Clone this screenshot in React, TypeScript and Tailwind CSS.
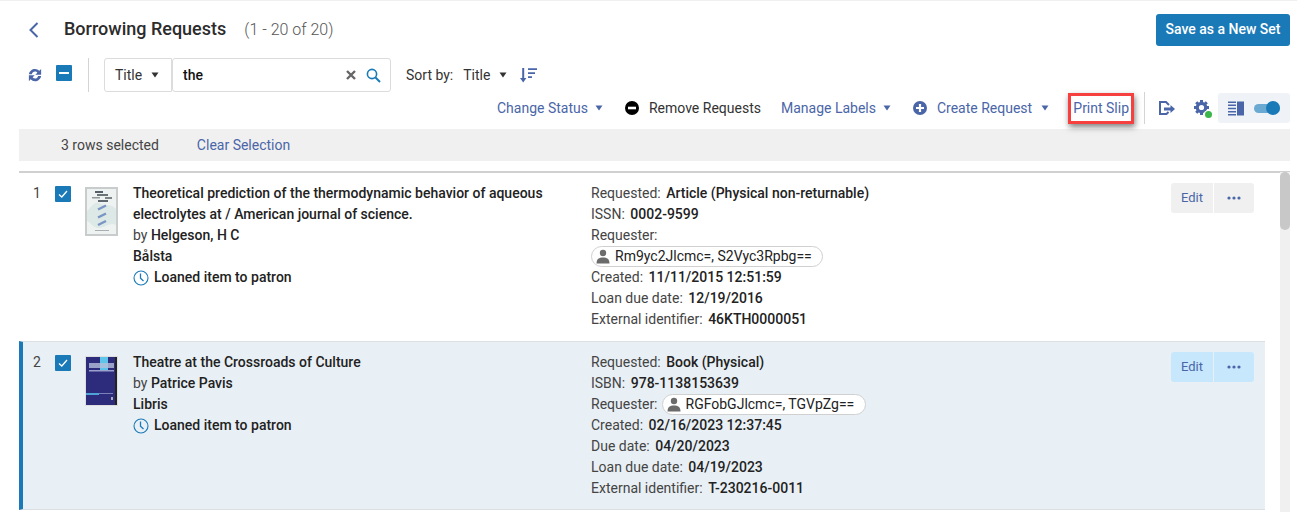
import React from "react";

const Caret = ({ c = "#4a66a8" }: { c?: string }) => (
  <svg width="8" height="6" viewBox="0 0 8 6" className="shrink-0"><path d="M0.5 0.5H7.5L4 5.5Z" fill={c} /></svg>
);

const Check = () => (
  <div className="w-4 h-4 bg-[#1a7ab8] rounded-[1px] flex items-center justify-center shrink-0">
    <svg width="12" height="12" viewBox="0 0 12 12"><path d="M2 6.5L4.8 9L10 3" fill="none" stroke="#fff" strokeWidth="1.3" /></svg>
  </div>
);

const Clock = () => (
  <svg width="16" height="16" viewBox="0 0 16 16" className="shrink-0">
    <circle cx="8" cy="8" r="7" fill="none" stroke="#1a7ab8" strokeWidth="1.1" />
    <path d="M7.5 3.5V8.2L10.5 11" fill="none" stroke="#1a7ab8" strokeWidth="1.3" />
  </svg>
);

const Person = () => (
  <svg width="14" height="15" viewBox="0 0 14 15" className="shrink-0">
    <circle cx="7" cy="4" r="3.2" fill="#6b6b6b" />
    <path d="M0.5 14.5C0.5 10 3 8.5 7 8.5C11 8.5 13.5 10 13.5 14.5Z" fill="#6b6b6b" />
  </svg>
);

const Label = ({ k, v }: { k: string; v: string }) => (
  <div className="h-[21px] leading-[21px] whitespace-nowrap">
    <span className="text-[#444]">{k}:</span> <span className="font-medium text-[#222] ml-[2px]">{v}</span>
  </div>
);

const Chip = ({ name, cls }: { name: string; cls: string }) => (
  <span className={`inline-flex items-center h-[21px] border border-[#d0d0d0] rounded-full bg-white text-[#222] pl-[4px] ${cls}`}>
    <Person />
    <span className="ml-[5px] whitespace-nowrap">{name}</span>
  </span>
);

const Actions = ({ bg }: { bg: string }) => (
  <div className="flex h-[30px] text-[#4a66a8] text-[13px]">
    <div className={`${bg} w-[42px] rounded-l-[3px] flex items-center justify-center`}>Edit</div>
    <div className={`${bg} w-[40px] ml-[1px] rounded-r-[3px] flex items-center justify-center`}>
      <svg width="14" height="4" viewBox="0 0 14 4"><circle cx="2" cy="2" r="1.6" fill="#4a66a8" /><circle cx="7" cy="2" r="1.6" fill="#4a66a8" /><circle cx="12" cy="2" r="1.6" fill="#4a66a8" /></svg>
    </div>
  </div>
);

const Cover1 = () => (
  <svg width="33" height="49" viewBox="0 0 33 49" className="shrink-0">
    <rect width="33" height="49" fill="#c9cccc" />
    <rect x="2" y="2" width="29" height="45" fill="#eef2f0" />
    <path d="M2 24C8 18 10 14 14 16C20 20 26 16 31 22V38C24 34 18 44 10 40C6 38 4 34 2 34Z" fill="#dde9e7" />
    <rect x="10" y="4" width="8" height="2" fill="#55606a" />
    <rect x="12" y="7" width="11" height="2" fill="#6b7478" />
    <rect x="7" y="10" width="8" height="1.5" fill="#8f989c" />
    <rect x="20" y="10" width="7" height="2" fill="#7c8488" />
    <rect x="13" y="13" width="10" height="2" fill="#5e686e" />
    <path d="M13 22.5L21 18.5M13 30.5L21 26.5M13 38L21 34" stroke="#7b96c4" strokeWidth="2.4" />
    <rect x="10" y="43" width="14" height="1" fill="#a8b0b0" />
  </svg>
);

const Cover2 = () => (
  <svg width="33" height="50" viewBox="0 0 33 50" className="shrink-0">
    <rect width="33" height="50" fill="#dedede" />
    <rect x="1" y="1" width="31" height="48" fill="#2d2c7c" />
    <rect x="15" y="1" width="8" height="13" fill="#5fc4ea" />
    <rect x="4" y="7" width="25" height="5" fill="#b4bfdc" opacity="0.8" />
    <rect x="4" y="14" width="25" height="1.5" fill="#9a9fcb" />
    <rect x="1" y="37" width="13" height="2" fill="#4ea3d6" />
    <rect x="14" y="37" width="14" height="1" fill="#7c80b8" />
    <rect x="30" y="1" width="2" height="48" fill="#222" />
    <rect x="26" y="41" width="2" height="3" fill="#aab" />
  </svg>
);

export default function App() {
  return (
    <div className="w-[1297px] h-[512px] overflow-hidden bg-white text-[14px] relative" style={{ fontFamily: "Roboto, sans-serif" }}>
      <div className="h-px bg-[#f0f0f0]" />
      {/* Title row */}
      <div className="flex items-center h-[45px] mt-[6px] pl-[28px] pr-[7px]">
        <svg width="12" height="16" viewBox="0 0 12 16" className="shrink-0"><path d="M9.5 1L2.5 8L9.5 15" fill="none" stroke="#4a66a8" strokeWidth="2" /></svg>
        <span className="ml-[24px] mb-[2px] text-[18px] font-medium text-[#2c2c2c] leading-none">Borrowing Requests</span>
        <span className="ml-[18px] text-[16px] font-light text-[#555] leading-none">(1 - 20 of 20)</span>
        <div className="ml-auto w-[134px] h-[32px] bg-[#1a7ab8] rounded-[3px] text-white font-medium flex items-center justify-center">Save as a New Set</div>
      </div>
      {/* Search row */}
      <div className="flex items-center h-[34px] mt-[6px] pl-[28px]">
        <svg width="14" height="14" viewBox="0 0 24 24" className="shrink-0">
          <path d="M1.5 10.5C2.5 5 7 1.5 12 1.5C15 1.5 17.5 2.8 19.5 4.8L22.5 1.5V11.5H12.5L16 8C15 6.5 13.5 6 12 6C9.5 6 7.3 7.8 6.6 10.5Z" fill="#4a66a8" />
          <path d="M22.5 13.5C21.5 19 17 22.5 12 22.5C9 22.5 6.5 21.2 4.5 19.2L1.5 22.5V12.5H11.5L8 16C9 17.5 10.5 18 12 18C14.5 18 16.7 16.2 17.4 13.5Z" fill="#4a66a8" />
        </svg>
        <div className="ml-[14px] mb-[4px] w-4 h-4 bg-[#1a7ab8] rounded-[1px] flex items-center justify-center shrink-0">
          <div className="w-[10px] h-[2px] bg-white" />
        </div>
        <div className="ml-[16px] w-px h-[34px] bg-[#d4d4d4]" />
        <div className="ml-[15px] w-[68px] h-[34px] border border-[#dcdcdc] rounded-l-[3px] flex items-center pl-[10px] gap-[9px] text-[#333]">
          <span>Title</span><Caret c="#333" />
        </div>
        <div className="w-[219px] h-[34px] border border-[#dcdcdc] rounded-[3px] flex items-center pl-[10px] pr-[9px] font-medium text-[#111]">
          <span>the</span>
          <svg width="10" height="10" viewBox="0 0 10 10" className="ml-auto shrink-0"><path d="M1 1L9 9M9 1L1 9" stroke="#666" strokeWidth="2.4" /></svg>
          <svg width="15" height="15" viewBox="0 0 15 15" className="ml-[10px] shrink-0"><circle cx="6" cy="6" r="4.6" fill="none" stroke="#1a7ab8" strokeWidth="1.6" /><path d="M9.5 9.5L14 14" stroke="#1a7ab8" strokeWidth="2" /></svg>
        </div>
        <span className="ml-[15px] text-[#333]">Sort by:</span>
        <span className="ml-[10px] text-[#333]">Title</span>
        <span className="ml-[9px]"><Caret c="#333" /></span>
        <svg width="17" height="15" viewBox="0 0 17 15" className="ml-[13px] shrink-0">
          <path d="M3.2 0V11" stroke="#4a66a8" strokeWidth="2" />
          <path d="M0 10H6.4L3.2 14.5Z" fill="#4a66a8" />
          <path d="M8 1.2H17M8 5.2H15M8 9.2H12" stroke="#4a66a8" strokeWidth="1.8" />
        </svg>
      </div>
      {/* Action row */}
      <div className="flex items-center h-[36px] mt-[-2px] text-[#4a66a8] whitespace-nowrap">
        <span className="ml-[497px]">Change Status</span>
        <span className="ml-[7px]"><Caret /></span>
        <svg width="14" height="14" viewBox="0 0 14 14" className="ml-[22px] shrink-0"><circle cx="7" cy="7" r="7" fill="#000" /><rect x="3" y="5.7" width="8" height="2.6" fill="#fff" /></svg>
        <span className="ml-[10px] text-[#333]">Remove Requests</span>
        <span className="ml-[20px]">Manage Labels</span>
        <span className="ml-[7px]"><Caret /></span>
        <svg width="14" height="14" viewBox="0 0 14 14" className="ml-[22px] shrink-0"><circle cx="7" cy="7" r="7" fill="#4a66a8" /><path d="M7 3V11M3 7H11" stroke="#fff" strokeWidth="2.2" /></svg>
        <span className="ml-[10px]">Create Request</span>
        <span className="ml-[9px]"><Caret /></span>
        <div className="ml-[19px] w-[66px] h-[31px] border-[3px] border-[#f5403f] flex items-center justify-center shadow-[1px_3px_6px_rgba(0,0,0,0.5)] mt-[1px] shrink-0">Print Slip</div>
        <div className="ml-[10px] w-px h-[32px] bg-[#d4d4d4] shrink-0" />
        <svg width="16" height="14" viewBox="0 0 16 14" className="ml-[14px] shrink-0">
          <path d="M6 1H1V13H7.5L9.5 11M6 1H7L10 4" fill="none" stroke="#4a66a8" strokeWidth="2" />
          <path d="M5 6.5H11.5V4L16 8L11.5 12V9.5H5Z" fill="#4a66a8" />
        </svg>
        <div className="ml-[19px] relative w-[16px] h-[16px] shrink-0">
          <svg width="15" height="15" viewBox="0 0 15 15">
            <circle cx="7.5" cy="7.5" r="4.2" fill="none" stroke="#4a66a8" strokeWidth="3.2" />
            <path d="M7.5 0V3M7.5 12V15M0 7.5H3M12 7.5H15M2.2 2.2L4.3 4.3M2.2 12.8L4.3 10.7M10.7 4.3L12.8 2.2" stroke="#4a66a8" strokeWidth="3" />
          </svg>
          <div className="absolute right-[-2px] bottom-[-2px] w-[7px] h-[7px] rounded-full bg-[#3cb54a] ring-1 ring-white" />
        </div>
        <div className="ml-[8px] w-[72px] h-[30px] bg-[#eff3f7] rounded-[3px] flex items-center pl-[10px] shrink-0">
          <svg width="16" height="15" viewBox="0 0 16 15" className="shrink-0">
            <path d="M0 1.2H8M0 4.2H8M0 7.5H8M0 10.8H8M0 13.8H8" stroke="#4a66a8" strokeWidth="1.5" />
            <rect x="9" y="0.5" width="7" height="14" fill="#4a66a8" />
          </svg>
          <div className="ml-[10px] relative w-[26px] h-[9px] rounded-full bg-[#6aa9d2]">
            <div className="absolute right-0 top-[-3px] w-[14px] h-[14px] rounded-full bg-[#1a7ab8]" />
          </div>
        </div>
      </div>
      {/* Selection bar */}
      <div className="ml-[19px] mr-[7px] mt-[3px] h-[32px] bg-[#f0f0f0] flex items-center">
        <span className="ml-[42px] text-[#444]">3 rows selected</span>
        <span className="ml-[38px] text-[#4a66a8]">Clear Selection</span>
      </div>
      {/* List */}
      <div className="ml-[19px] mr-[7px] mt-[10px] h-[2px] bg-[#d0d0d0]" />
      <div className="ml-[19px] mr-[32px]">
        <div className="h-[168px] relative">
          <Row idx="1" />
          <div className="absolute left-[66px] top-[14px]"><Cover1 /></div>
          <div className="absolute left-[114px] top-[10px] text-[#222]">
            <div className="font-medium h-[21px] leading-[21px] whitespace-nowrap">Theoretical prediction of the thermodynamic behavior of aqueous</div>
            <div className="font-medium h-[21px] leading-[21px] whitespace-nowrap">electrolytes at / American journal of science.</div>
            <div className="h-[21px] leading-[21px]"><span className="text-[#444]">by</span> <span className="font-medium">Helgeson, H C</span></div>
            <div className="font-medium h-[21px] leading-[21px]">Bålsta</div>
            <div className="font-medium h-[21px] flex items-center gap-[5px]"><Clock />Loaned item to patron</div>
          </div>
          <div className="absolute left-[572px] top-[10px]">
            <Label k="Requested" v="Article (Physical non-returnable)" />
            <Label k="ISSN" v="0002-9599" />
            <div className="h-[21px] leading-[21px] text-[#444]">Requester:</div>
            <div className="h-[21px] flex items-center"><Chip name="Rm9yc2Jlcmc=, S2Vyc3Rpbg==" cls="w-[232px]" /></div>
            <Label k="Created" v="11/11/2015 12:51:59" />
            <Label k="Loan due date" v="12/19/2016" />
            <Label k="External identifier" v="46KTH0000051" />
          </div>
          <div className="absolute right-[11px] top-[10px]"><Actions bg="bg-[#f0f0f0]" /></div>
        </div>
        <div className="h-[169px] bg-[#e9f0f5] border-t border-b border-[#dcdfe2] border-l-4 border-l-[#1a7ab8] relative">
          <Row idx="2" offset />
          <div className="absolute left-[62px] top-[14px]"><Cover2 /></div>
          <div className="absolute left-[110px] top-[10px] text-[#222]">
            <div className="font-medium h-[21px] leading-[21px] whitespace-nowrap">Theatre at the Crossroads of Culture</div>
            <div className="h-[21px] leading-[21px]"><span className="text-[#444]">by</span> <span className="font-medium">Patrice Pavis</span></div>
            <div className="font-medium h-[21px] leading-[21px]">Libris</div>
            <div className="font-medium h-[21px] flex items-center gap-[5px]"><Clock />Loaned item to patron</div>
          </div>
          <div className="absolute left-[568px] top-[10px]">
            <Label k="Requested" v="Book (Physical)" />
            <Label k="ISBN" v="978-1138153639" />
            <div className="h-[21px] flex items-center whitespace-nowrap">
              <span className="text-[#444]">Requester:</span>
              <Chip name="RGFobGJlcmc=, TGVpZg==" cls="w-[204px] ml-[4px]" />
            </div>
            <Label k="Created" v="02/16/2023 12:37:45" />
            <Label k="Due date" v="04/20/2023" />
            <Label k="Loan due date" v="04/19/2023" />
            <Label k="External identifier" v="T-230216-0011" />
          </div>
          <div className="absolute right-[11px] top-[10px]"><Actions bg="bg-[#c7e7fd]" /></div>
        </div>
      </div>
      {/* Scrollbar */}
      <div className="absolute left-[1280px] top-[172px] w-[10px] h-[340px] bg-[#f0f0f0]">
        <div className="h-[58px] bg-[#c8c8c8] rounded-[5px]" />
      </div>
    </div>
  );
}

function Row({ idx, offset }: { idx: string; offset?: boolean }) {
  return (
    <>
      <span className={`absolute top-[10px] leading-[21px] text-[#444] ${offset ? "left-[10px]" : "left-[14px]"}`}>{idx}</span>
      <div className={`absolute top-[13px] ${offset ? "left-[32px]" : "left-[36px]"}`}><Check /></div>
    </>
  );
}
